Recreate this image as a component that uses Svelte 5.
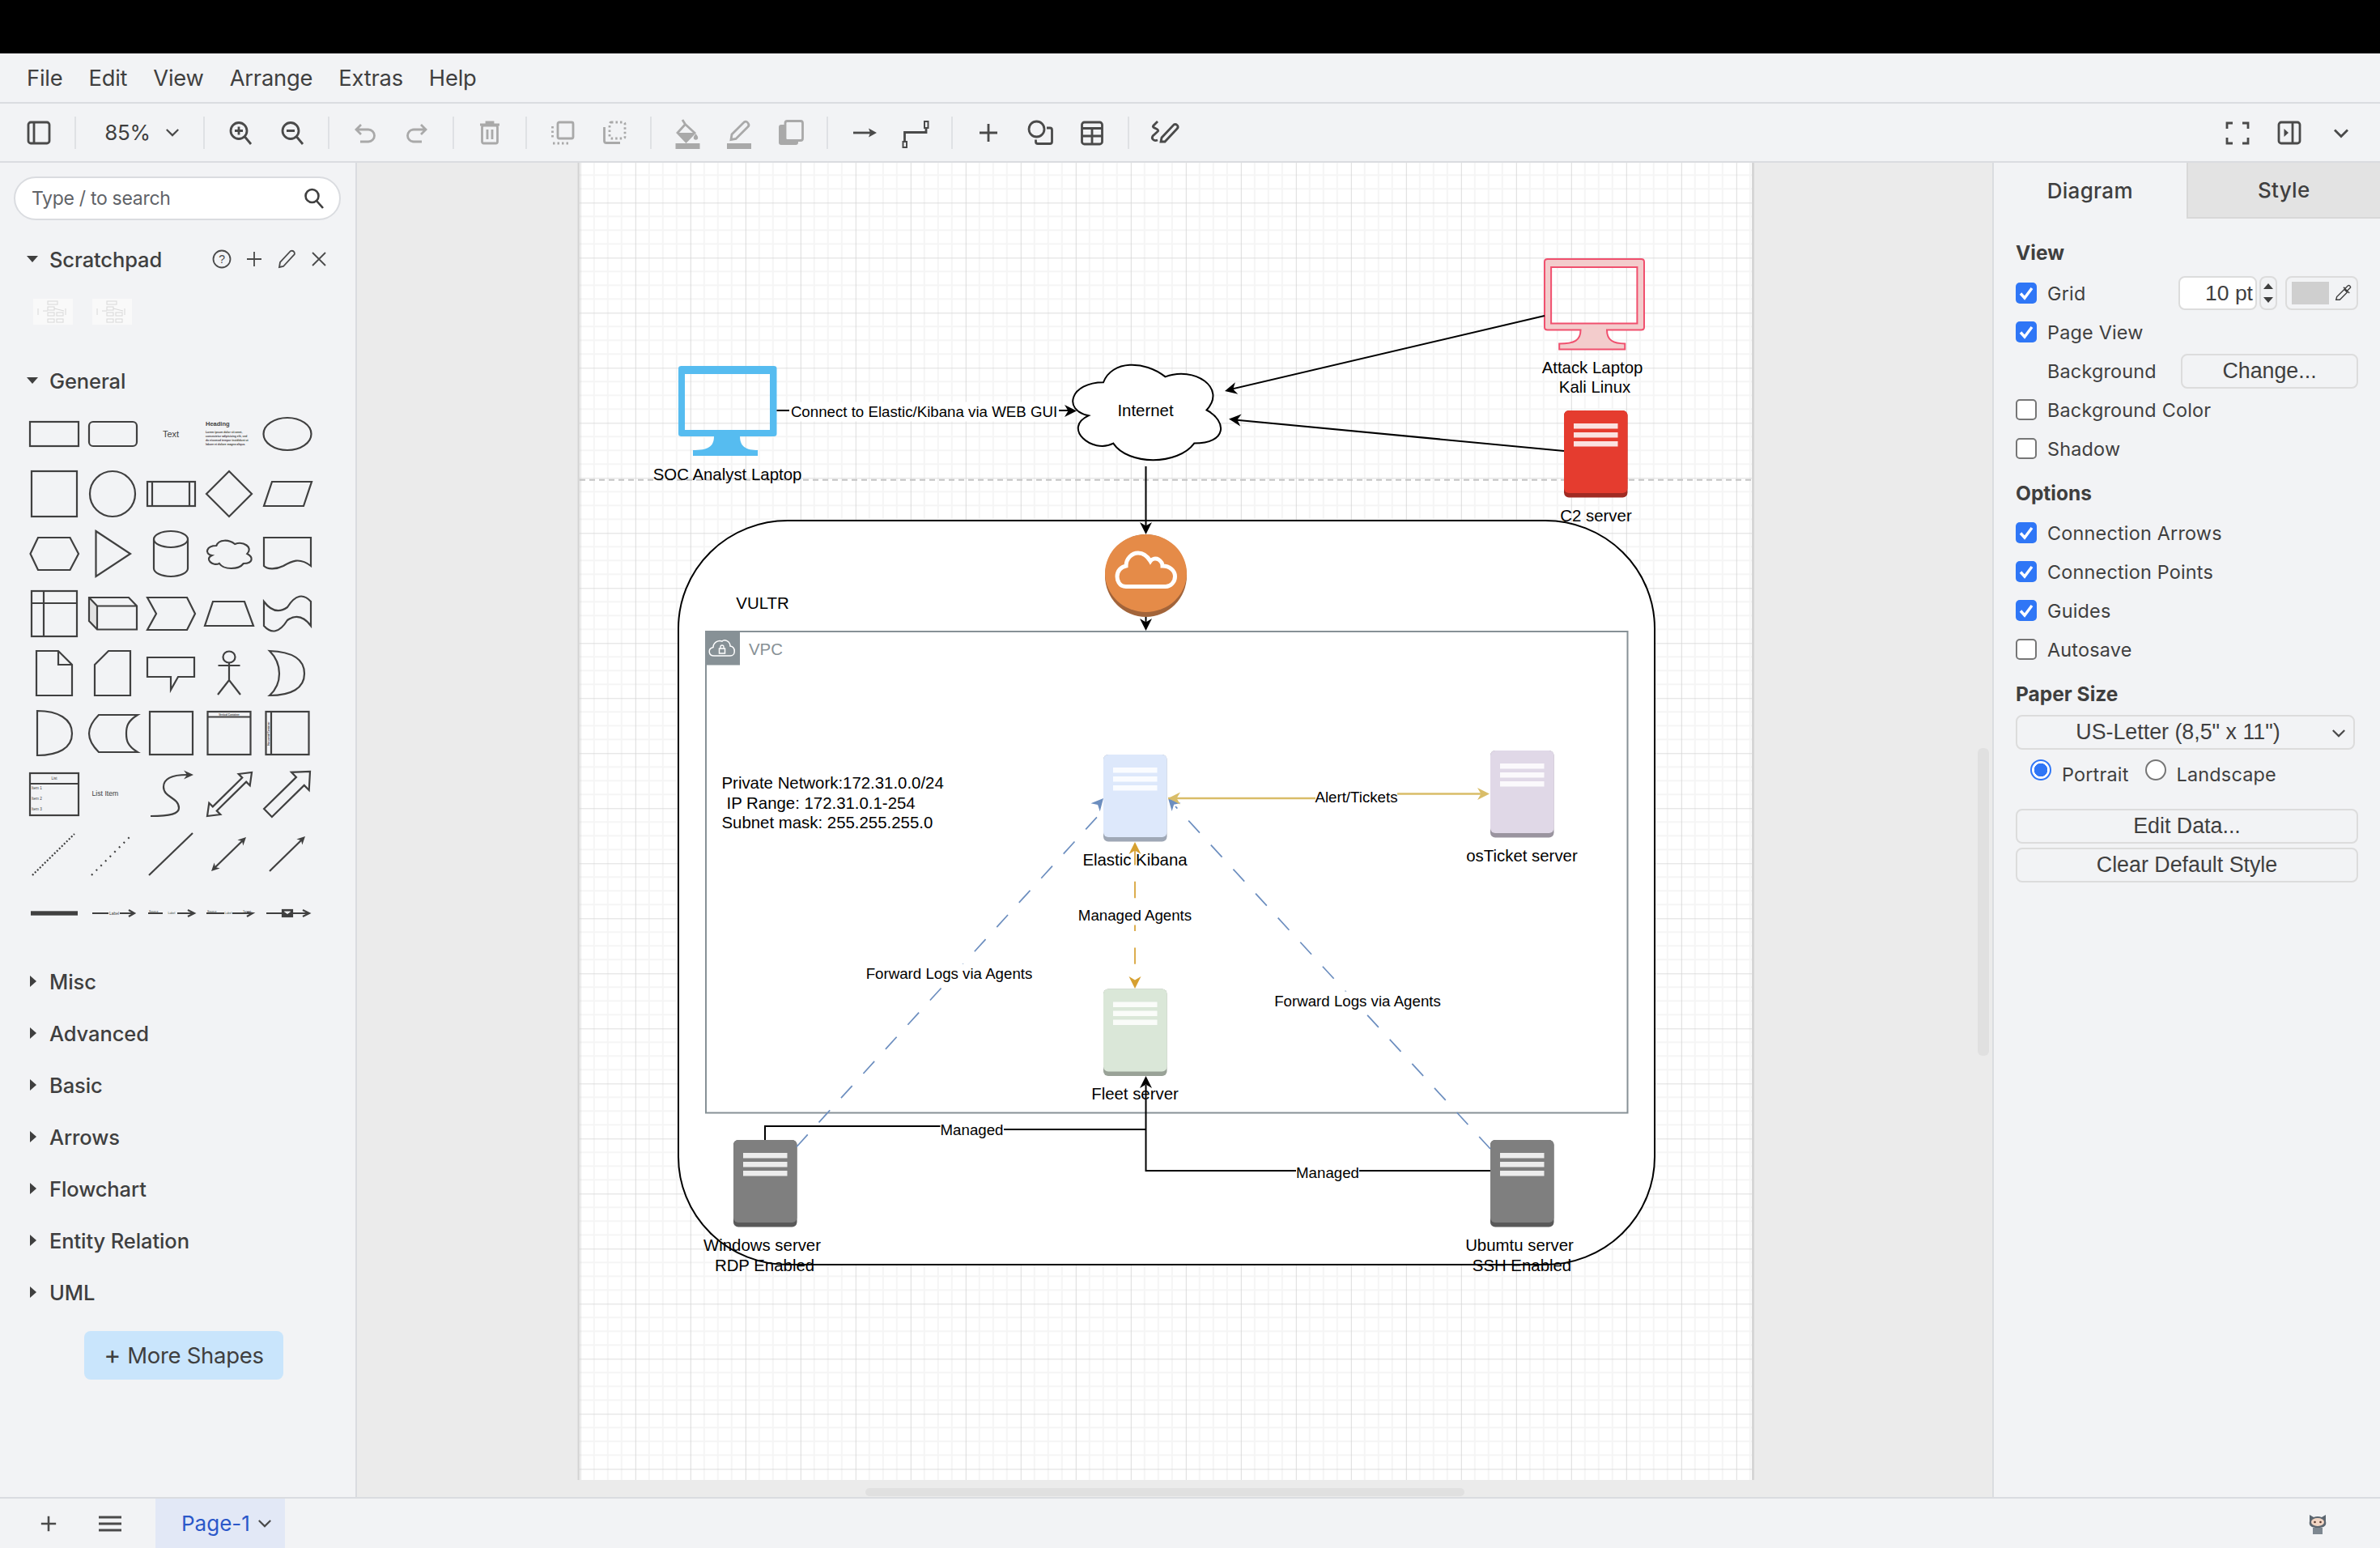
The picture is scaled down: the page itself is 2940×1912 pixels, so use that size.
<script>
  // diagram editor mock: menu, toolbar, shape palette, canvas with the network diagram, format panel
  const menus = ["File", "Edit", "View", "Arrange", "Extras", "Help"];
  const closedSections = ["Misc", "Advanced", "Basic", "Arrows", "Flowchart", "Entity Relation", "UML"];

  // cloud shape as the editor draws it, on its bounding box
  const cloud = (x, y, w, h) => {
    const p = (a, b) => `${x + a * w} ${y + b * h}`;
    return `M${p(.25, .25)} C${p(.05, .25)} ${p(0, .5)} ${p(.16, .55)} C${p(0, .66)} ${p(.18, .9)} ${p(.31, .8)} C${p(.4, 1)} ${p(.7, 1)} ${p(.8, .8)} C${p(1, .8)} ${p(1, .6)} ${p(.875, .5)} C${p(1, .3)} ${p(.8, .1)} ${p(.625, .2)} C${p(.5, .05)} ${p(.3, .05)} ${p(.25, .25)} Z`;
  };

  const monitor = (x, y, w, h) => {
    const p = (a, b) => `${x + a * w} ${y + b * h}`;
    return `M${p(.03, 0)} L${p(.97, 0)} Q${p(1, 0)} ${p(1, .03)} L${p(1, .755)} Q${p(1, .784)} ${p(.97, .784)} L${p(.626, .784)} C${p(.626, .9)} ${p(.69, .937)} ${p(.807, .937)} L${p(.807, 1)} L${p(.148, 1)} L${p(.148, .937)} C${p(.3, .937)} ${p(.362, .9)} ${p(.362, .784)} L${p(.03, .784)} Q${p(0, .784)} ${p(0, .755)} L${p(0, .03)} Q${p(0, 0)} ${p(.03, 0)} Z M${p(.066, .09)} L${p(.066, .712)} L${p(.93, .712)} L${p(.93, .09)} Z`;
  };

  // classic arrowhead with its tip on (x2, y2), pointing away from (x1, y1)
  const head = (x1, y1, x2, y2, L = 15, W = 7.5, N = 10.5) => {
    const d = Math.hypot(x2 - x1, y2 - y1), ux = (x2 - x1) / d, uy = (y2 - y1) / d;
    const pt = (t, s) => `${x2 - ux * t - uy * s},${y2 - uy * t + ux * s}`;
    return `${pt(0, 0)} ${pt(L, W)} ${pt(N, 0)} ${pt(L, -W)}`;
  };

  const blockArrow = (x1, y1, x2, y2, hw, ahw, al, both = false) => {
    const d = Math.hypot(x2 - x1, y2 - y1), ux = (x2 - x1) / d, uy = (y2 - y1) / d;
    const pt = (t, s) => `${x1 + ux * t - uy * s},${y1 + uy * t + ux * s}`;
    const tail = both ? [pt(0, 0), pt(al, ahw), pt(al, hw)] : [pt(0, hw)];
    const end = both ? [pt(al, -hw), pt(al, -ahw)] : [pt(0, -hw)];
    return [...tail, pt(d - al, hw), pt(d - al, ahw), pt(d, 0), pt(d - al, -ahw), pt(d - al, -hw), ...end].join(" ");
  };

  const servers = [
    { x: 1363, y: 932, fill: "#dde8fb", band: "#9fa8b6" },
    { x: 1841, y: 927, fill: "#e0d8e7", band: "#9a949f" },
    { x: 1363, y: 1221.5, fill: "#dae7d8", band: "#99a297" },
    { x: 906, y: 1408, fill: "#7f7f7f", band: "#595959" },
    { x: 1841, y: 1408, fill: "#7f7f7f", band: "#595959" },
    { x: 1932, y: 507, fill: "#e53c2f", band: "#a02a22" },
  ];

  const black = [
    "M959.5 507 H1322", "M1908 390 L1520 481", "M1932 557 L1525 518.5", "M1415.5 576 V650", "M1415.5 762 V770",
    "M945 1408 V1391 H1162", "M1240 1395 H1415.5", "M1841 1446 H1415.5 V1340",
  ];
  const blackHeads = [
    [959.5, 507.5, 1330, 507.5], [1908, 390, 1513, 483], [1932, 557, 1518, 517.5], [1415.5, 576, 1415.5, 660],
    [1415.5, 762, 1415.5, 779], [1415.5, 1446, 1415.5, 1329],
  ];

  const labels = [
    { x: 1141.5, y: 508.5, t: "Connect to Elastic/Kibana via WEB GUI", w: 333 },
    { x: 1172.5, y: 1202.5, t: "Forward Logs via Agents", w: 208 },
    { x: 1677, y: 1236.5, t: "Forward Logs via Agents", w: 208 },
    { x: 1402, y: 1130.5, t: "Managed Agents", w: 143 },
    { x: 1675.5, y: 984.5, t: "Alert/Tickets", w: 101 },
    { x: 1200.5, y: 1395, t: "Managed", w: 78 },
    { x: 1640, y: 1448, t: "Managed", w: 78 },
  ];
  const captions = [
    { x: 898.5, y: 586, t: "SOC Analyst Laptop" }, { x: 1415, y: 506.5, t: "Internet" }, { x: 1967, y: 454, t: "Attack Laptop" },
    { x: 1970, y: 478, t: "Kali Linux" }, { x: 1971.5, y: 637, t: "C2 server" }, { x: 942, y: 745, t: "VULTR" },
    { x: 1402, y: 1062, t: "Elastic Kibana" }, { x: 1880, y: 1057, t: "osTicket server" }, { x: 1402, y: 1351, t: "Fleet server" },
    { x: 941.5, y: 1538, t: "Windows server" }, { x: 944.5, y: 1562.5, t: "RDP Enabled" }, { x: 1877, y: 1538, t: "Ubumtu server" },
    { x: 1880, y: 1562.5, t: "SSH Enabled" },
  ];
  const notes = [
    { x: 891.5, y: 967, t: "Private Network:172.31.0.0/24" },
    { x: 897.5, y: 992, t: "IP Range: 172.31.0.1-254" },
    { x: 891.5, y: 1016, t: "Subnet mask: 255.255.255.0" },
  ];
</script>

{#snippet chevron()}
  <svg class="chev" viewBox="0 0 20 12"><path d="M2 2 L10 10 L18 2" /></svg>
{/snippet}

{#snippet check(on)}
  <span class="box" class:on>
    {#if on}<svg viewBox="0 0 26 26"><path d="M6 13.5 L11 19 L20 7" /></svg>{/if}
  </span>
{/snippet}

{#snippet tiny()}
  <svg class="mini" viewBox="0 0 49 32">
    <rect width="49" height="32" fill="#f9f9f9" />
    <g fill="none" stroke="#d8d8d8" stroke-width="1">
      <rect x="18" y="3" width="12" height="4" /><rect x="18" y="10" width="8" height="4" /><rect x="18" y="17" width="8" height="4" />
      <rect x="18" y="25" width="8" height="4" /><rect x="29" y="25" width="8" height="4" /><rect x="29" y="17" width="8" height="4" />
      <path d="M6 12 V20 M12 15 H18 M26 12 L38 15 M40 12 V20" />
    </g>
  </svg>
{/snippet}

<div class="app">
  <div class="topbar"></div>

  <nav class="menubar">
    {#each menus as m}<span>{m}</span>{/each}
  </nav>

  <div class="toolbar">
    <button class="tb"><svg viewBox="0 0 36 36"><rect x="5" y="5" width="26" height="26" rx="3" /><path d="M12 5 V31" /></svg></button>
    <i class="sep"></i>
    <button class="zoomsel"><span>85%</span>{@render chevron()}</button>
    <i class="sep"></i>
    <button class="tb"><svg viewBox="0 0 36 36"><circle cx="16" cy="15.5" r="10" /><path d="M23.5 23 L31 32 M11 15.5 H21 M16 10.5 V20.5" /></svg></button>
    <button class="tb"><svg viewBox="0 0 36 36"><circle cx="16" cy="15.5" r="10" /><path d="M23.5 23 L31 32 M11 15.5 H21" /></svg></button>
    <i class="sep"></i>
    <button class="tb off"><svg viewBox="0 0 36 36"><path d="M13 8 L7 14 L13 20 M7 14 H22 a7.5 7.5 0 0 1 0 15 H12" /></svg></button>
    <button class="tb off"><svg viewBox="0 0 36 36"><path d="M23 8 L29 14 L23 20 M29 14 H14 a7.5 7.5 0 0 0 0 15 H24" /></svg></button>
    <i class="sep"></i>
    <button class="tb off"><svg viewBox="0 0 36 36"><path d="M6 8 H30 M14 7 V5 H22 V7" /><rect x="8.5" y="9" width="19" height="22" rx="2" /><path d="M15 14 V26 M21 14 V26" /></svg></button>
    <i class="sep"></i>
    <button class="tb off"><svg viewBox="0 0 36 36"><rect x="12" y="5" width="19" height="20" rx="2" /><path d="M5.5 10 V25" stroke-dasharray="2.5 3" /><path d="M6 31 H27" stroke-dasharray="2.5 3" /></svg></button>
    <button class="tb off"><svg viewBox="0 0 36 36"><rect x="12" y="5" width="19" height="20" rx="2" stroke-dasharray="2.5 3" /><path d="M5.5 11 V28 a2.5 2.5 0 0 0 2.5 2.5 H25" /></svg></button>
    <i class="sep"></i>
    <button class="tb off"><svg viewBox="0 0 36 36"><path d="M12 2 L15.5 7.5 M15.5 7.5 L27 18 L16.5 29 L6 18 Z" /><path class="solid" d="M6 18 H27 L16.5 29 Z" /><path class="solid" d="M28.5 19 c-1.5 2 -2.7 3.5 -2.7 5 a2.7 2.7 0 0 0 5.4 0 c0 -1.5 -1.2 -3 -2.7 -5" /><rect class="solid" x="3.5" y="31" width="30" height="7" /></svg></button>
    <button class="tb off"><svg viewBox="0 0 36 36"><path d="M8 26.5 L9 20 L24 5 Q27 3 29 6 Q31 8.5 29 10.5 L14 25.5 Z" /><rect class="solid" x="3" y="31" width="30" height="7" /></svg></button>
    <button class="tb off"><svg viewBox="0 0 36 36"><rect class="solid" x="3" y="8" width="24" height="25" rx="3" /><rect x="11" y="3.5" width="21.5" height="24" rx="2.5" fill="#f2f3f5" /></svg></button>
    <i class="sep"></i>
    <button class="tb"><svg viewBox="0 0 36 36"><path d="M5 18 H27" /><path class="solid" d="M24 12.5 L34 18 L24 23.5 L26 18 Z" /></svg></button>
    <button class="tb"><svg viewBox="0 0 36 36"><path d="M4.5 29 V17.5 H31 V12" /><rect class="thin" x="29" y="4" width="4.5" height="8" /><rect class="thin" x="2.5" y="29" width="4.5" height="7" /></svg></button>
    <i class="sep"></i>
    <button class="tb"><svg viewBox="0 0 36 36"><path d="M7 18 H29 M18 7 V29" /></svg></button>
    <button class="tb"><svg viewBox="0 0 36 36"><ellipse cx="13.5" cy="13.5" rx="9.5" ry="9.5" /><path d="M26 12 H30 a2.5 2.5 0 0 1 2.5 2.5 V29 a2.5 2.5 0 0 1 -2.5 2.5 H15 a2.5 2.5 0 0 1 -2.5 -2.5 V26.5" /></svg></button>
    <button class="tb"><svg viewBox="0 0 36 36"><rect x="5.5" y="5" width="25" height="27" rx="3" /><path d="M5.5 12.5 H30.5 M5.5 22 H30.5 M18 12.5 V32" /></svg></button>
    <i class="sep"></i>
    <button class="tb"><svg viewBox="0 0 36 36"><path d="M9 4 L3.5 9.5 C1.5 12 11 13 9.5 16 L3 22 C1 25 4 29 9 27" /><path d="M13 29 L14 24 L29 8 Q31.5 6.5 33.5 9 Q35 11 33 13 L18 29 Z" /></svg></button>

    <div class="spacer"></div>
    <button class="tb"><svg viewBox="0 0 36 36"><path d="M5 13 V6 H12 M24 6 H31 V13 M31 24 V31 H24 M12 31 H5 V24" /></svg></button>
    <button class="tb"><svg viewBox="0 0 36 36"><rect x="5" y="5" width="26" height="26" rx="3" /><path d="M22 5 V31" /><path class="solid" d="M11.5 13 L17 18 L11.5 23 Z" /></svg></button>
    <button class="tb"><svg viewBox="0 0 36 36"><path d="M10 14.5 L18 22.5 L26 14.5" /></svg></button>
  </div>

  <div class="main">
    <aside class="sidebar">
      <div class="search">
        <span>Type / to search</span>
        <svg viewBox="0 0 26 26"><circle cx="10.5" cy="10" r="8" /><path d="M16 16 L24 25" /></svg>
      </div>

      <div class="section open">
        <i class="tri down"></i><span class="name">Scratchpad</span>
        <div class="pad-tools">
          <svg viewBox="0 0 24 24"><ellipse cx="12" cy="12" rx="10.5" ry="10.5" /><text x="12" y="17" text-anchor="middle">?</text></svg>
          <svg viewBox="0 0 24 24"><path d="M12 3 V21 M3 12 H21" /></svg>
          <svg viewBox="0 0 24 24"><path d="M3 22 L4 16 L17 2 Q20 1 21.5 3.5 Q22.5 6 21 7 L8 21 Z" /></svg>
          <svg viewBox="0 0 24 24"><path d="M4 4 L20 20 M20 4 L4 20" /></svg>
        </div>
      </div>
      <div class="minis">{@render tiny()}{@render tiny()}</div>

      <div class="section open gen">
        <i class="tri down"></i><span class="name">General</span>
      </div>

      <div class="palette">
        <!-- row 1 -->
        <svg viewBox="-36 -37 72 74"><rect x="-30" y="-15" width="60" height="30" /></svg>
        <svg viewBox="-36 -37 72 74"><rect x="-29" y="-15" width="59" height="30" rx="5" /></svg>
        <svg viewBox="-36 -37 72 74"><text class="t" x="0" y="4" font-size="11" text-anchor="middle">Text</text></svg>
        <svg viewBox="-36 -37 72 74">
          <text class="t" x="-29" y="-10" font-size="7.5" font-weight="700">Heading</text>
          <g class="t" font-size="3.4" font-weight="700">
            <text x="-29" y="-1">Lorem ipsum dolor sit amet,</text><text x="-29" y="4">consectetur adipisicing elit, sed</text>
            <text x="-29" y="9">do eiusmod tempor incididunt ut</text><text x="-29" y="13.5">labore et dolore magna aliqua.</text>
          </g>
        </svg>
        <svg viewBox="-36 -37 72 74"><ellipse rx="29.5" ry="20" /></svg>
        <!-- row 2 -->
        <svg viewBox="-36 -37 72 74"><rect x="-28" y="-28" width="56" height="56" /></svg>
        <svg viewBox="-36 -37 72 74"><ellipse rx="28" ry="28" /></svg>
        <svg viewBox="-36 -37 72 74"><rect x="-29" y="-15" width="59" height="30" /><path d="M-23 -15 V15 M23 -15 V15" /></svg>
        <svg viewBox="-36 -37 72 74"><path d="M0 -28 L28 0 L0 28 L-28 0 Z" /></svg>
        <svg viewBox="-36 -37 72 74"><path d="M-19 -15 H30 L20 15 H-29 Z" /></svg>
        <!-- row 3 -->
        <svg viewBox="-36 -37 72 74"><path d="M-20 -20 H19.5 L30 0 L19.5 20 H-20 L-29.5 0 Z" /></svg>
        <svg viewBox="-36 -37 72 74"><path d="M-20.5 -28 L22 0 L-20.5 28 Z" /></svg>
        <svg viewBox="-36 -37 72 74"><path d="M-21 -18 V18 A21 10 0 0 0 21 18 V-18 A21 10 0 0 0 -21 -18 A21 10 0 0 0 21 -18" /></svg>
        <svg viewBox="-36 -37 72 74"><path d={cloud(-31, -20, 61, 40)} /></svg>
        <svg viewBox="-36 -37 72 74"><path d="M-29 -20 H29 V15 C15 4 5 9 -5 15 C-15 20 -25 19 -29 15 Z" /></svg>
        <!-- row 4 -->
        <svg viewBox="-36 -37 72 74"><rect x="-28" y="-28" width="56" height="56" /><path d="M-13 -28 V28 M-28 -13 H28" /></svg>
        <svg viewBox="-36 -37 72 74"><path class="shade" d="M-29 -20 L-19 -9.5 V19.5 L-29 9 Z" /><path d="M-29 -20 H20 L30 -9.5 V19.5 H-19 L-29 9 Z M-29 -20 L-19 -9.5 H30 M-19 -9.5 V19.5" /></svg>
        <svg viewBox="-36 -37 72 74"><path d="M-29 -20 H20 L30 0 L20 20 H-29 L-18 0 Z" /></svg>
        <svg viewBox="-36 -37 72 74"><path d="M-20 -15 H19 L30 15 H-30 Z" /></svg>
        <svg viewBox="-36 -37 72 74"><path d="M-29 -15 C-20 -3 -10 -1 0 -8 C10 -24 20 -25 29 -15 V15 C20 3 10 1 0 8 C-10 24 -20 25 -29 15 Z" /></svg>
        <!-- row 5 -->
        <svg viewBox="-36 -37 72 74"><path d="M-22 -28 H5 L22 -11 V27 H-22 Z M5 -28 V-11 H22" /></svg>
        <svg viewBox="-36 -37 72 74"><path d="M-22 -11 L-5 -28 H22 V27 H-22 Z" /></svg>
        <svg viewBox="-36 -37 72 74"><path d="M-29 -20 H29 V4 H9 L0 20 V4 H-29 Z" /></svg>
        <svg viewBox="-36 -37 72 74"><ellipse cy="-20.5" rx="7.5" ry="7" /><path d="M0 -13.5 V8 M-13.5 -10 H13.5 M-14 26 L0 8 L14 26" /></svg>
        <svg viewBox="-36 -37 72 74"><path d="M-22 -28 C5 -27 21 -18 21 0 C21 18 5 27 -22 27 C-12 18 -10 8 -10 0 C-10 -8 -12 -18 -22 -28 Z" /></svg>
        <!-- row 6 -->
        <svg viewBox="-36 -37 72 74"><path d="M-21 -28 C5 -28 22 -18 22 0 C22 18 5 27 -21 27 Z" /></svg>
        <svg viewBox="-36 -37 72 74"><path d="M-17 -23 H31 C18 -15 17 -8 17 0 C17 8 18 15 31 23 H-17 C-24 16 -29 8 -29 0 C-29 -8 -24 -16 -17 -23 Z" /></svg>
        <svg viewBox="-36 -37 72 74"><rect x="-26" y="-27" width="53" height="53" /></svg>
        <svg viewBox="-36 -37 72 74"><rect x="-26.5" y="-27" width="53" height="53" /><path d="M-26.5 -20.5 H26.5" /><text class="t" x="0" y="-22.5" font-size="3" font-weight="700" text-anchor="middle">Vertical Container</text></svg>
        <svg viewBox="-36 -37 72 74"><rect x="-26.5" y="-27" width="53" height="53" /><path d="M-20 -27 V26" /><text class="t" font-size="3" font-weight="700" text-anchor="middle" transform="translate(-22 0) rotate(-90)">Horizontal Container</text></svg>
        <!-- row 7 -->
        <svg viewBox="-36 -37 72 74">
          <rect x="-30" y="-25" width="60" height="52" /><path d="M-30 -12 H30" />
          <g class="t" font-size="4.6"><text x="0" y="-17" text-anchor="middle">List</text><text x="-28" y="-5">Item 1</text><text x="-28" y="8">Item 2</text><text x="-28" y="21">Item 3</text></g>
        </svg>
        <svg viewBox="-36 -37 72 74"><text class="t" x="-25.5" y="3" font-size="8.7">List Item</text></svg>
        <svg viewBox="-36 -37 72 74"><path d="M-25 28 C0 28 10 25 10 18 C10 5 -9 5 -9 -8 C-9 -20 5 -23 20 -23" /><polygon class="fillhead" points={head(-9, -23, 28, -23, 12, 5.5, 8)} /></svg>
        <svg viewBox="-36 -37 72 74"><polygon points={blockArrow(-27, 28, 28, -26, 3.5, 10, 13, true)} /></svg>
        <svg viewBox="-36 -37 72 74"><polygon points={blockArrow(-24, 24, 28, -27, 7, 15.5, 17)} /></svg>
        <!-- row 8 -->
        <svg viewBox="-36 -37 72 74"><path d="M-27 27 L25 -24" stroke-dasharray="2 2.2" /></svg>
        <svg viewBox="-36 -37 72 74"><path d="M-26 27 L23 -22" stroke-dasharray="2 6" /></svg>
        <svg viewBox="-36 -37 72 74"><path d="M-27 27 L27 -25" /></svg>
        <svg viewBox="-36 -37 72 74"><path d="M-18 18 L17 -16" /><polygon class="fillhead" points={head(22, -21, -22, 22, 10, 5, 7)} /><polygon class="fillhead" points={head(-22, 22, 21, -20, 10, 5, 7)} /></svg>
        <svg viewBox="-36 -37 72 74"><path d="M-22 22 L18 -17" /><polygon class="fillhead" points={head(-22, 22, 22, -21, 10, 5, 7)} /></svg>
        <!-- row 9 -->
        <svg viewBox="-36 -37 72 74"><rect class="bar" x="-29" y="-2.7" width="58" height="5.4" /></svg>
        <svg viewBox="-36 -37 72 74"><path d="M-25 0 H-5 M9 0 H26 M20 -4 L27 0 L20 4" /><text class="t" x="2" y="1.8" font-size="5" text-anchor="middle">Label</text></svg>
        <svg viewBox="-36 -37 72 74"><path d="M-28 0 H-10 M8 0 H28 M21 -4 L29 0 L21 4" /><g class="t" font-size="3.6"><text x="-27" y="-1.5">Source</text><text x="1" y="1.2" text-anchor="middle">Label</text></g></svg>
        <svg viewBox="-36 -37 72 74"><path d="M-28 0 H-6 M4 0 H28 M22 -1 L29 0 L22 4" /><g class="t" font-size="3.6"><text x="-27" y="-1.5">Source</text><text x="-1" y="1.2" text-anchor="middle">Label</text><text x="27" y="-1.5" text-anchor="end">Target</text></g></svg>
        <svg viewBox="-36 -37 72 74"><path d="M-26 0 H-6 M6 0 H26 M19 -4 L27 0 L19 4" /><rect x="-6" y="-4" width="12" height="8" class="box2" /><path class="thin2" d="M-3.5 -2 L0 0.5 L3.5 -2 Z" /></svg>
      </div>

      {#each closedSections as s}
        <div class="section closed"><i class="tri right"></i><span class="name">{s}</span></div>
      {/each}

      <button class="more"><span class="plus">+</span> More Shapes</button>
    </aside>

    <div class="canvas">
      <svg class="stage" viewBox="441 201 2020 1648" font-family="'Liberation Sans', Arial, sans-serif" font-size="20.4">
        <defs>
          <pattern id="grid" x="716.8" y="182.3" width="68" height="68" patternUnits="userSpaceOnUse">
            <path d="M17 0 V68 M34 0 V68 M51 0 V68 M0 17 H68 M0 34 H68 M0 51 H68" stroke="#f5f5f5" stroke-width="2" fill="none" />
            <path d="M0 0 V68 M0 0 H68" stroke="#d4d4d4" stroke-width="1.6" fill="none" />
          </pattern>
        </defs>

        <rect x="713.5" y="201" width="3" height="1627" fill="#d6d6d6" />
        <rect x="2164" y="201" width="3" height="1627" fill="#d6d6d6" />
        <rect x="716" y="201" width="1448" height="1627" fill="#fff" />
        <rect x="716" y="201" width="1448" height="1627" fill="url(#grid)" />
        <path d="M716 592.7 H2164" stroke="#c4c4c4" stroke-width="2" stroke-dasharray="7 5" />

        <!-- VULTR box and VPC group -->
        <rect x="838" y="643" width="1206" height="919" rx="135" ry="133" fill="#fff" stroke="#000" stroke-width="2" />
        <rect x="872" y="780" width="1138.5" height="594.5" fill="none" stroke="#879196" stroke-width="2" />
        <rect x="871.5" y="779" width="42.5" height="42.5" fill="#879196" />
        <path d="M882 810 C875 810 874 801 881 799.5 C881 794 887 790 892 792 C895 789 902 792 902 798 C909 799 909 810 902 810 Z" fill="none" stroke="#fff" stroke-width="1.5" />
        <rect x="888.5" y="801" width="7" height="6" fill="none" stroke="#fff" stroke-width="1.5" />
        <path d="M890 801 V799 a2 2 0 0 1 4 0 V801" fill="none" stroke="#fff" stroke-width="1.3" />
        <text x="925" y="809" fill="#879196">VPC</text>

        <!-- monitors -->
        <path d={monitor(838, 452, 121.5, 111)} fill="#56bcf0" fill-rule="evenodd" />
        <path d={monitor(1908, 320, 123, 111.5)} fill="#f3cccc" fill-rule="evenodd" stroke="#f0506e" stroke-width="2" />

        <!-- servers -->
        {#each servers as s}
          <rect x={s.x} y={s.y} width="78.5" height="107.5" rx="6" fill={s.band} />
          <rect x={s.x} y={s.y} width="78.5" height="102" rx="6" fill={s.fill} />
          <rect x={s.x + 12} y={s.y + 16} width="54.5" height="6.5" fill="#fff" opacity=".85" />
          <rect x={s.x + 12} y={s.y + 27} width="54.5" height="6.5" fill="#fff" opacity=".85" />
          <rect x={s.x + 12} y={s.y + 38} width="54.5" height="6.5" fill="#fff" opacity=".85" />
        {/each}

        <!-- internet cloud and gateway -->
        <path d={cloud(1312, 438, 204, 137)} fill="#fff" stroke="#000" stroke-width="2" />
        <ellipse cx="1415.5" cy="711" rx="50.5" ry="51" fill="#a2643a" />
        <ellipse cx="1415.5" cy="708" rx="50.5" ry="48" fill="#e58b48" />
        <path d="M1391 724.5 C1382 724.5 1380 716 1380 712 C1380 705 1385 700 1391 699 C1391 690 1398 683 1406 683 C1413 683 1418 688 1421 693 C1423 690 1428 689 1431 691 C1434 693 1436 696 1436 699 C1445 699 1451.5 705 1451.5 712 C1451.5 719 1446 724.5 1440 724.5 Z" fill="none" stroke="#fff" stroke-width="5" />

        <!-- edges -->
        <g fill="none" stroke-width="1.7" stroke="#6c8ebf" stroke-dasharray="20.4 20.4">
          <path d="M984 1416.5 L1368 995" />
          <path d="M1841 1419 L1452 996" />
        </g>
        <polygon points={head(984, 1416.5, 1363, 986)} fill="#6c8ebf" />
        <polygon points={head(1841, 1419, 1443, 986)} fill="#6c8ebf" />

        <path d="M1402 1048 V1212" fill="none" stroke="#d6a030" stroke-width="1.7" stroke-dasharray="20.4 20.4" />
        <polygon points={head(1402, 1130, 1402, 1040)} fill="#d6a030" />
        <polygon points={head(1402, 1130, 1402, 1221)} fill="#d6a030" />

        <path d="M1443 986 H1625 M1726 980.5 H1832" fill="none" stroke="#d9bd68" stroke-width="2.6" />
        <polygon points={head(1625, 986, 1443, 986)} fill="#d9bd68" />
        <polygon points={head(1726, 980.5, 1840, 980.5)} fill="#d9bd68" />

        <g fill="none" stroke="#000" stroke-width="2">
          {#each black as d}<path {d} />{/each}
        </g>
        {#each blackHeads as [x1, y1, x2, y2]}
          <polygon points={head(x1, y1, x2, y2)} fill="#000" />
        {/each}

        <!-- edge labels sit on a white plate, node captions do not -->
        {#each labels as l}
          <rect x={l.x - l.w / 2} y={l.y - 12} width={l.w} height="24" fill="#fff" />
          <text x={l.x} y={l.y + 6.5} font-size="18.7" text-anchor="middle">{l.t}</text>
        {/each}
        {#each captions as c}
          <text x={c.x} y={c.y + 7} text-anchor="middle">{c.t}</text>
        {/each}
        {#each notes as n}
          <text x={n.x} y={n.y + 7}>{n.t}</text>
        {/each}
      </svg>
      <div class="scroll v"></div>
      <div class="scroll h"></div>
    </div>

    <aside class="panel">
      <div class="tabs">
        <div class="tab active">Diagram</div>
        <div class="tab">Style</div>
      </div>
      <div class="form">
        <h4>View</h4>
        <div class="row">
          {@render check(true)}<span class="lbl">Grid</span>
          <div class="gridctl">
            <div class="num">10 pt</div>
            <div class="spin"><i class="up"></i><i class="dn"></i></div>
            <div class="color">
              <span class="swatch"></span>
              <svg viewBox="0 0 24 24"><path d="M3 21 L4 17 L14 7 L18 11 L8 21 Z M13 4 L21 12 M15 6 L19 2 Q21 1 22 3 Q23 4 22 5 L18 9" /></svg>
            </div>
          </div>
        </div>
        <div class="row">{@render check(true)}<span class="lbl">Page View</span></div>
        <div class="row indent"><span class="lbl">Background</span><button class="btn change">Change...</button></div>
        <div class="row">{@render check(false)}<span class="lbl">Background Color</span></div>
        <div class="row">{@render check(false)}<span class="lbl">Shadow</span></div>

        <h4 class="next">Options</h4>
        <div class="row">{@render check(true)}<span class="lbl">Connection Arrows</span></div>
        <div class="row">{@render check(true)}<span class="lbl">Connection Points</span></div>
        <div class="row">{@render check(true)}<span class="lbl">Guides</span></div>
        <div class="row">{@render check(false)}<span class="lbl">Autosave</span></div>

        <h4 class="next paper">Paper Size</h4>
        <div class="select">US-Letter (8,5" x 11"){@render chevron()}</div>
        <div class="radios">
          <span class="radio on"></span><span class="lbl">Portrait</span>
          <span class="radio second"></span><span class="lbl">Landscape</span>
        </div>
        <button class="btn wide first">Edit Data...</button>
        <button class="btn wide">Clear Default Style</button>
      </div>
    </aside>
  </div>

  <footer class="footer">
    <svg class="foot-ic" viewBox="0 0 24 24"><path d="M12 2 V22 M2 12 H22" /></svg>
    <svg class="foot-ic menu" viewBox="0 0 28 20"><path d="M0 2 H28 M0 10 H28 M0 18 H28" /></svg>
    <div class="page-tab">Page-1 {@render chevron()}</div>
    <div class="spacer"></div>
    <svg class="cat" viewBox="0 0 28 30">
      <path d="M4 12 L4 4 L9 7 Q14 5 19 7 L24 4 L24 12 Q26 20 14 20 Q2 20 4 12 Z" fill="#5c6670" />
      <ellipse cx="14" cy="13" rx="8" ry="5" fill="#f2d6c4" />
      <circle cx="10.5" cy="13" r="1.3" fill="#5a3a30" /><circle cx="17.5" cy="13" r="1.3" fill="#5a3a30" />
      <path d="M8 20 H20 V28 H8 Z" fill="#7d8790" />
    </svg>
  </footer>
</div>

<style>
  :global(body) { margin: 0; background: #f2f3f5; }
  .app {
    width: 2940px; height: 1912px; overflow: hidden; background: #f2f3f5; color: #3f3f3f;
    font-family: Inter, "Liberation Sans", sans-serif;
  }
  button { font: inherit; color: inherit; background: none; border: 0; padding: 0; }
  svg { display: block; }
  .spacer { flex: 1; }

  .topbar { height: 66px; background: #000; }

  .menubar {
    height: 62px; box-sizing: border-box; border-bottom: 2px solid #dadce0; display: flex; align-items: center; padding-left: 33px; gap: 32px;
    font-size: 27.3px; letter-spacing: -0.2px;
  }

  .toolbar { height: 73px; box-sizing: border-box; border-bottom: 2px solid #dadce0; display: flex; align-items: center; padding: 0 16px; }
  .sep { width: 2px; height: 40px; margin: 0 12px; background: #dfe1e4; }
  .tb { width: 64px; height: 40px; display: flex; align-items: center; justify-content: center; }
  .tb svg { width: 36px; height: 36px; overflow: visible; fill: none; stroke: #4a4a4a; stroke-width: 2.8; }
  .tb.off svg { stroke: #a9a9a9; }
  .tb .solid { fill: #4a4a4a; stroke: none; }
  .tb.off .solid { fill: #a9a9a9; }
  .tb .thin { stroke-width: 2; }
  .zoomsel { width: 133px; display: flex; align-items: center; justify-content: center; gap: 18px; font-size: 26px; letter-spacing: -0.3px; padding-left: 6px; }
  .chev { width: 18px; height: 11px; fill: none; stroke: #4a4a4a; stroke-width: 2.4; }

  .main { display: flex; height: 1648px; }

  .sidebar { width: 439px; flex: none; border-right: 2px solid #dadce0; box-sizing: content-box; }
  .search {
    margin: 17px 0 0 17px; width: 404px; height: 54px; box-sizing: border-box; background: #fff;
    border: 2px solid #dadce0; border-radius: 27px; display: flex; align-items: center; justify-content: space-between;
    padding: 0 18px 0 20px; font-size: 23px; color: #5f6368; letter-spacing: -0.3px;
  }
  .search svg { width: 26px; height: 26px; fill: none; stroke: #3f3f3f; stroke-width: 2.6; }

  .section { display: flex; align-items: center; font-weight: 500; font-size: 25.5px; letter-spacing: -0.1px; color: #3f3f3f; }
  .section.open { height: 48px; padding-left: 33px; margin-top: 24px; }
  .section.gen { margin-top: 45px; }
  .section.closed { height: 64px; padding-left: 37px; }
  .name { white-space: nowrap; }
  .tri { display: block; width: 0; height: 0; }
  .tri.down { border: 7px solid transparent; border-top: 8px solid #3f3f3f; border-bottom: 0; margin-right: 14px; }
  .tri.right { border: 7px solid transparent; border-left: 8px solid #3f3f3f; border-right: 0; margin-right: 16px; }
  .pad-tools { display: flex; margin-left: 62px; gap: 16px; align-items: center; }
  .pad-tools svg { width: 24px; height: 24px; fill: none; stroke: #4a4a4a; stroke-width: 1.8; }
  .pad-tools text { fill: #4a4a4a; stroke: none; font-size: 14px; font-family: "Liberation Sans", sans-serif; }

  .minis { display: flex; gap: 24px; margin: 25px 0 0 41px; }
  .mini { width: 49px; height: 32px; }

  .palette { display: grid; grid-template-columns: repeat(5, 72px); grid-auto-rows: 74px; margin: 5px 0 15px 30.7px; }
  .palette svg { width: 72px; height: 74px; fill: none; stroke: #404040; stroke-width: 2.2; }
  .palette .t { fill: #404040; stroke: none; font-family: "Liberation Sans", sans-serif; }
  .palette .shade { fill: #e2e2e2; stroke: none; }
  .palette .fillhead, .palette .bar { fill: #404040; stroke: none; }
  .palette .box2 { fill: #404040; stroke: #404040; }
  .palette .thin2 { stroke: #f2f3f5; stroke-width: 1; fill: #f2f3f5; }

  .more {
    display: flex; align-items: center; justify-content: center; gap: 8px; width: 246px; height: 60px; margin: 16px 0 0 104px;
    background: #c9e5fc; border-radius: 8px; font-size: 27.5px; letter-spacing: -0.3px;
  }
  .more .plus { font-size: 32px; line-height: 1; }

  .canvas { flex: 1; position: relative; background: #ebebeb; min-width: 0; }
  .stage { width: 2020px; height: 1648px; }
  .scroll { position: absolute; background: #e0e0e0; border-radius: 6px; }
  .scroll.v { left: 2002px; top: 723px; width: 14px; height: 380px; }
  .scroll.h { left: 628px; top: 1637px; width: 740px; height: 10px; }

  .panel { width: 479px; flex: none; border-left: 2px solid #dadce0; box-sizing: border-box; }
  .tabs { display: flex; height: 69px; font-weight: 500; font-size: 26px; letter-spacing: 0.3px; }
  .tab { flex: 1; display: flex; align-items: center; justify-content: center; box-sizing: border-box; background: #e3e3e3; border-left: 2px solid #d8d8d8; border-bottom: 2px solid #d8d8d8; }
  .tab.active { background: none; border: 0; }
  .form { padding: 27px 27px 0 27px; display: flex; flex-direction: column; }
  h4 { margin: 0 0 11px; height: 30px; line-height: 30px; font-size: 24.5px; font-weight: 700; color: #3f3f3f; }
  h4.next { margin-top: 16px; margin-bottom: 10px; }
  h4.paper { margin-bottom: 11px; }
  .row { height: 48px; display: flex; align-items: center; position: relative; }
  .row.indent { padding-left: 39px; }
  .lbl { font-size: 23.4px; letter-spacing: 0.2px; white-space: nowrap; }
  .box { width: 26px; height: 26px; box-sizing: border-box; flex: none; margin-right: 13px; border-radius: 5px; background: #fff; border: 2px solid #767676; }
  .box.on { background: #2f76f6; border: 0; }
  .box svg { width: 26px; height: 26px; fill: none; stroke: #fff; stroke-width: 3.4; }

  .gridctl { margin-left: auto; display: flex; align-items: stretch; height: 42px; }
  .num {
    width: 97px; box-sizing: border-box; background: #fff; border: 2px solid #dcdcdc; border-radius: 8px; text-align: right;
    padding-right: 3px; font-size: 26.5px; line-height: 38px; font-family: "Liberation Sans", sans-serif;
  }
  .spin { width: 22px; box-sizing: border-box; margin-left: 3px; border: 2px solid #dcdcdc; border-radius: 8px; display: flex; flex-direction: column; align-items: center; justify-content: center; gap: 10px; }
  .spin i { width: 0; height: 0; border: 6px solid transparent; border-top: 0; border-bottom: 7px solid #3f3f3f; }
  .spin i.dn { border-bottom: 0; border-top: 7px solid #3f3f3f; border-left: 6px solid transparent; border-right: 6px solid transparent; }
  .color { width: 90px; box-sizing: border-box; margin-left: 10px; border: 2px solid #dcdcdc; border-radius: 8px; display: flex; align-items: center; padding-left: 6px; gap: 6px; }
  .swatch { width: 46px; height: 28px; background: #cfcfcf; }
  .color svg { width: 22px; height: 22px; fill: none; stroke: #3f3f3f; stroke-width: 1.5; }

  .btn { box-sizing: border-box; height: 43px; border: 2px solid #dcdcdc; border-radius: 8px; font-family: "Liberation Sans", sans-serif; font-size: 26.8px; color: #3f3f3f; }
  .change { margin-left: auto; width: 219px; }
  .wide { width: 423px; margin-bottom: 5px; display: block; }
  .wide.first { margin-top: 20px; }

  .select {
    position: relative; box-sizing: border-box; width: 419px; height: 43px; border: 2px solid #dcdcdc; border-radius: 8px; display: flex; align-items: center; justify-content: center;
    font-family: "Liberation Sans", sans-serif; font-size: 26.8px; padding-right: 18px;
  }
  .select .chev { position: absolute; right: 9px; top: 15px; }
  .radios { display: flex; align-items: center; height: 46px; padding-left: 18px; margin-top: 7px; }
  .radio { width: 26px; height: 26px; box-sizing: border-box; border-radius: 50%; background: #fff; border: 2px solid #767676; margin-right: 13px; margin-top: -10px; }
  .radio.on { border: 2.5px solid #2f76f6; background: radial-gradient(circle, #2f76f6 0 8px, #fff 8.5px); }
  .radio.second { margin-left: 20px; }

  .footer { height: 63px; box-sizing: border-box; border-top: 2px solid #dadce0; display: flex; align-items: center; }
  .foot-ic { width: 22px; height: 22px; margin-left: 49px; fill: none; stroke: #4a4a4a; stroke-width: 2.8; }
  .foot-ic.menu { width: 28px; height: 20px; margin-left: 51px; }
  .page-tab {
    margin-left: 42px; width: 160px; height: 61px; box-sizing: border-box; background: #e2e8f6; color: #2b58c9; display: flex; align-items: center; padding-left: 32px; gap: 9px; font-size: 26px;
  }
  .cat { width: 28px; height: 30px; margin-right: 63px; }
</style>
